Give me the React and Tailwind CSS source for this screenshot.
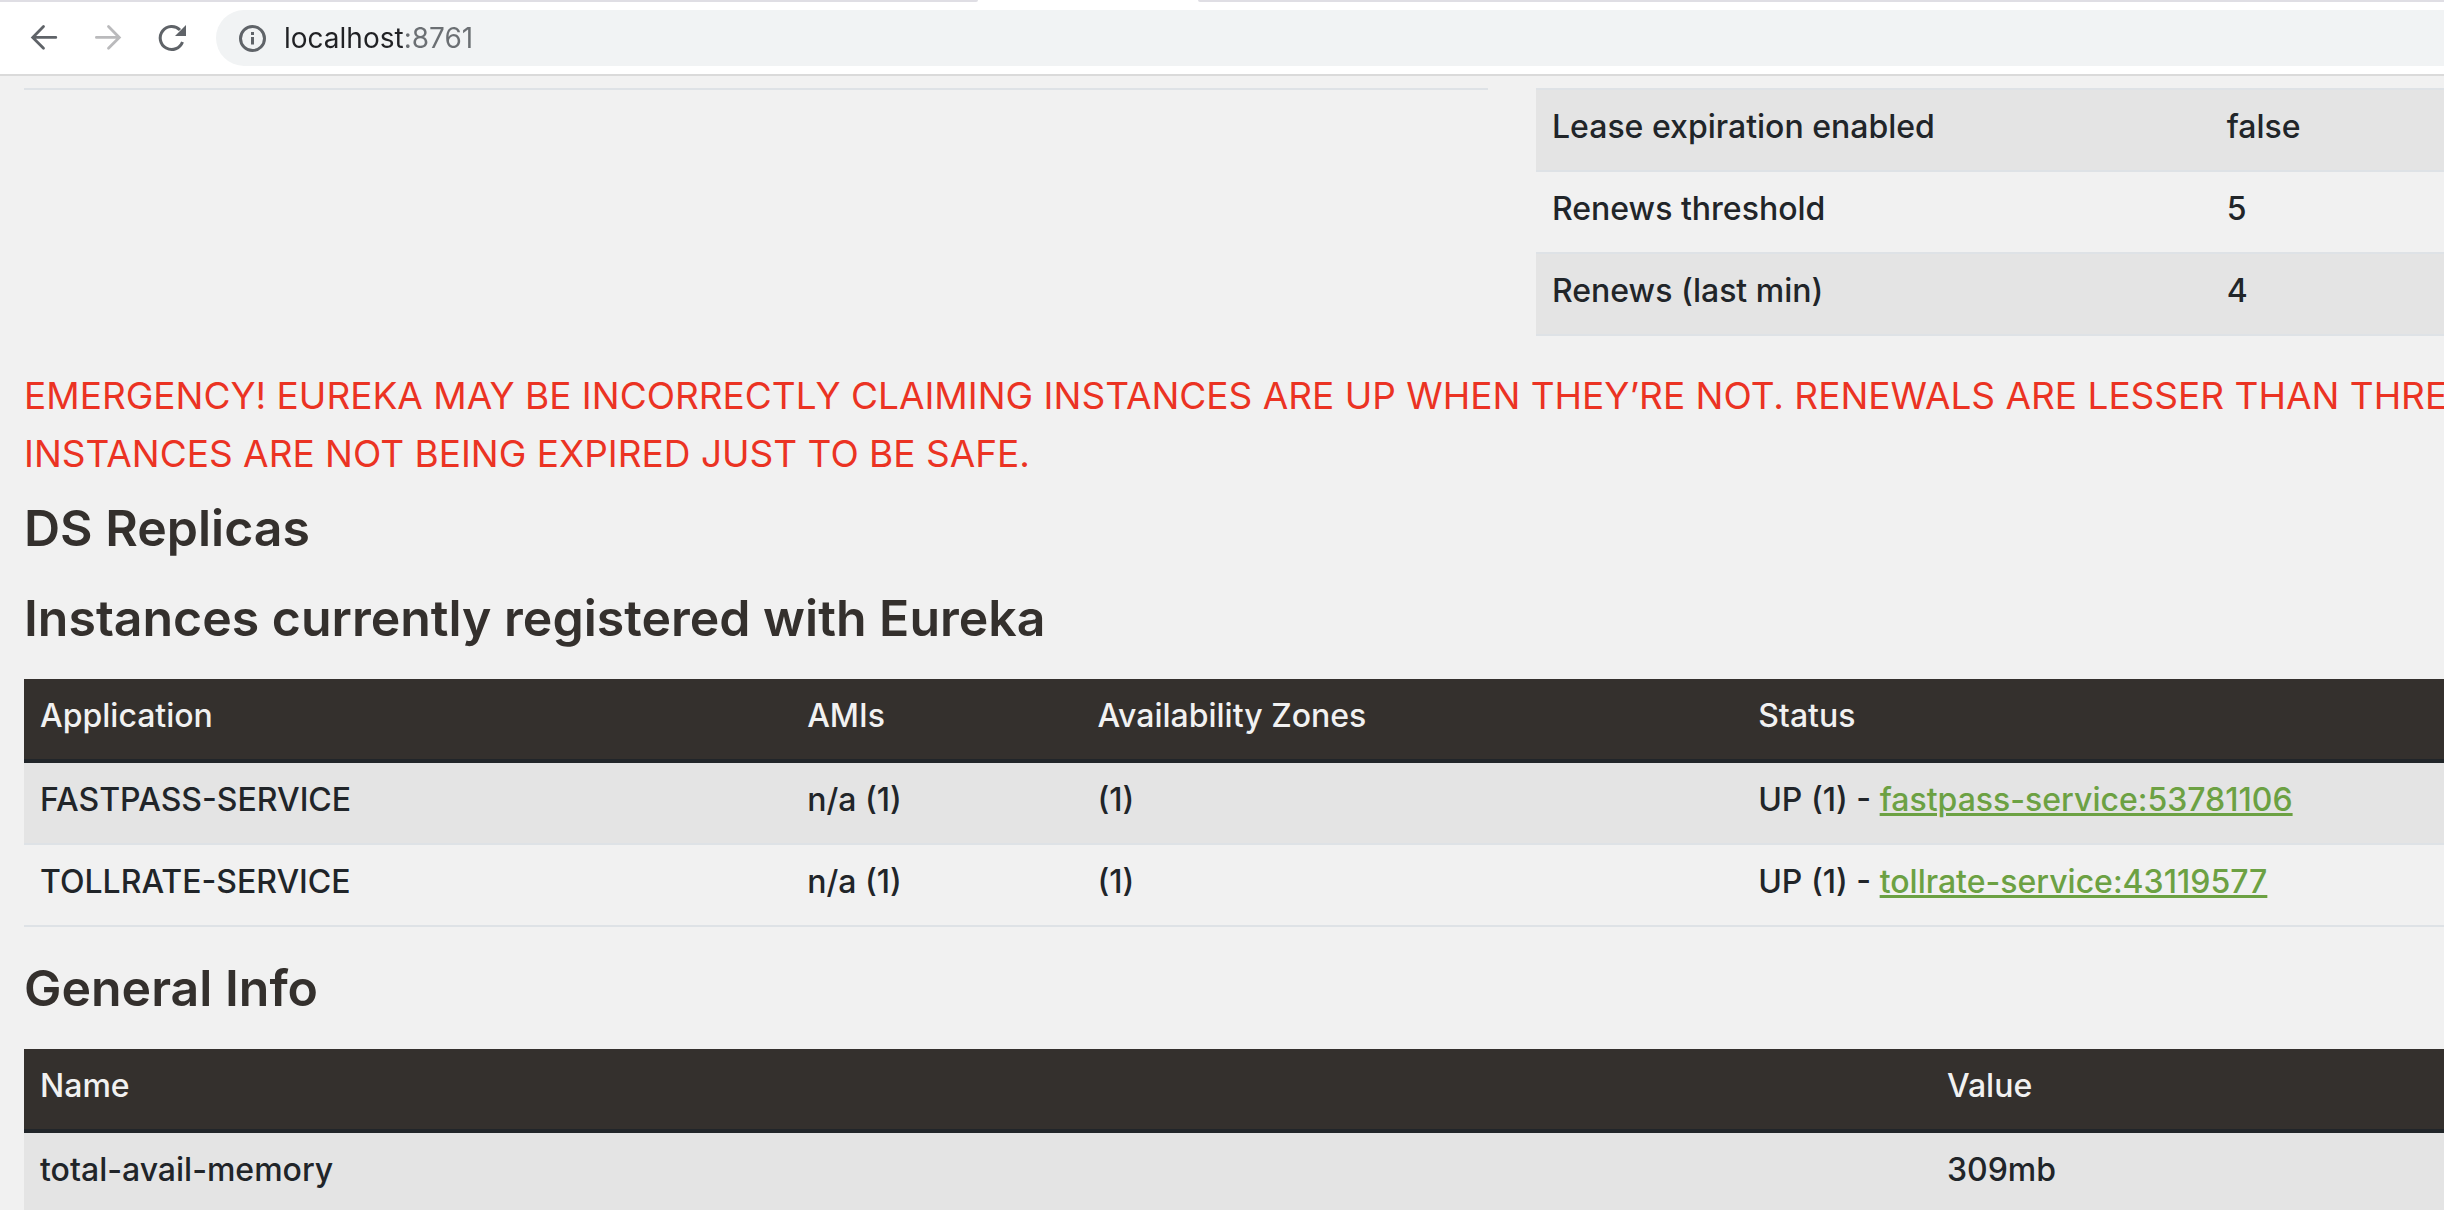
import React from "react";

function Cell({ as: Tag = "td", className = "", ...rest }) {
  return <Tag className={`px-4 pt-[13px] pb-[19px] text-left font-medium ${className}`} {...rest} />;
}

function Table({ columns, head, children, ...rest }) {
  return (
    <table className="w-full table-fixed border-separate border-spacing-0" {...rest}>
      <colgroup>
        {columns.map((c, i) => (
          <col key={i} className={c} />
        ))}
      </colgroup>
      {head && (
        <thead className="bg-[#34302d] text-[#f1f1f1]">
          <tr>
            {head.map((h) => (
              <Cell as="th" scope="col" key={h} className="border-b-4 border-[#212529]">
                {h}
              </Cell>
            ))}
          </tr>
        </thead>
      )}
      <tbody>{children}</tbody>
    </table>
  );
}

function Row({ cells }) {
  return (
    <tr className="odd:bg-[#e4e4e4]">
      {cells.map((c, i) => (
        <Cell key={i} className="border-b-2 border-[#dee2e6]">
          {c}
        </Cell>
      ))}
    </tr>
  );
}

function Heading({ children }) {
  return (
    <h1 className="mb-8 text-[50px] leading-[58px] font-semibold text-[#34302d]">{children}</h1>
  );
}

const status = [
  ["Lease expiration enabled", "false"],
  ["Renews threshold", "5"],
  ["Renews (last min)", "4"],
];

const instances = [
  ["FASTPASS-SERVICE", "fastpass-service:53781106"],
  ["TOLLRATE-SERVICE", "tollrate-service:43119577"],
];

function Toolbar() {
  return (
    <header className="border-b-2 border-[#dadada] bg-white">
      <div className="flex h-0.5" aria-hidden="true">
        <div className="w-[40%] rounded-br-sm bg-[#dfdee4]" />
        <div className="w-[9%]" />
        <div className="flex-1 rounded-bl-sm bg-[#dfdee4]" />
      </div>
      <div className="flex items-center py-2 pl-7">
        <div className="flex gap-8">
          <button type="button" aria-label="Back" className="text-[#5f6368]">
            <svg className="size-8" viewBox="0 0 32 32" fill="none" stroke="currentColor" strokeWidth="2.8">
              <path d="M27.8 15.4H5M15.5 4.6 4.7 15.4l10.8 10.8" strokeLinecap="round" />
            </svg>
          </button>
          <button type="button" aria-label="Forward" className="text-[#bababc]">
            <svg className="size-8" viewBox="0 0 32 32" fill="none" stroke="currentColor" strokeWidth="2.8">
              <path d="M4.4 15.4H27M16.5 4.6l10.8 10.8-10.8 10.8" strokeLinecap="round" />
            </svg>
          </button>
          <button type="button" aria-label="Reload" className="text-[#5f6368]">
            <svg className="size-8" viewBox="0 0 32 32" fill="none">
              <path
                d="M26.5 20A11.5 11.5 0 1 1 24 8"
                stroke="currentColor"
                strokeWidth="3"
              />
              <path d="M30 3v11H19z" fill="currentColor" />
            </svg>
          </button>
        </div>
        <label className="ml-7 flex h-14 flex-1 items-center gap-4 rounded-l-full bg-[#f1f3f4] pl-5">
          <svg className="size-8" viewBox="0 0 32 32" fill="none" aria-hidden="true">
            <circle cx="16.5" cy="16.5" r="12" stroke="#5f6368" strokeWidth="3" />
            <path d="M16.5 15v7.5M16.5 10v3" stroke="#5f6368" strokeWidth="3" />
          </svg>
          <span className="sr-only">Address</span>
          <input
            type="text"
            defaultValue="localhost:8761"
            className="h-10 flex-1 bg-[linear-gradient(90deg,#202124_119px,#6b6f73_119px)] bg-clip-text text-[28px] leading-10 text-transparent outline-none"
          />
        </label>
      </div>
    </header>
  );
}

export default function App() {
  return (
    <div className="h-screen overflow-hidden bg-[#f1f1f1] font-['Inter',sans-serif] text-[32px] leading-[48px] text-[#212529]">
      <Toolbar />
      <main className="pt-3 pl-6">
        <div className="mb-[31px] grid grid-cols-[1464fr_908fr] gap-12">
          <div className="border-t-2 border-[#dee2e6]" />
          <div className="border-t-2 border-[#dee2e6]">
            <Table columns={["w-[74.3%]", ""]} aria-label="System status">
              {status.map((r) => (
                <Row key={r[0]} cells={r} />
              ))}
            </Table>
          </div>
        </div>

        <h4 className="mb-4 text-[37px] leading-[58px] whitespace-nowrap text-[#eb3323]">
          EMERGENCY! EUREKA MAY BE INCORRECTLY CLAIMING INSTANCES ARE UP WHEN THEY’RE NOT. RENEWALS ARE LESSER THAN THRESHOLD
          <br />
          INSTANCES ARE NOT BEING EXPIRED JUST TO BE SAFE.
        </h4>

        <Heading>DS Replicas</Heading>

        <Heading>Instances currently registered with Eureka</Heading>
        <Table
          columns={["w-[31.7%]", "w-[12%]", "w-[27.3%]", ""]}
          head={["Application", "AMIs", "Availability Zones", "Status"]}
        >
          {instances.map(([name, id]) => (
            <Row
              key={name}
              cells={[
                name,
                "n/a (1)",
                "(1)",
                <>
                  UP (1) -{" "}
                  <a
                    href={`#${id}`}
                    className="text-[#6ca143] underline decoration-[3px] underline-offset-2"
                  >
                    {id}
                  </a>
                </>,
              ]}
            />
          ))}
        </Table>

        <div className="mt-8">
          <Heading>General Info</Heading>
          <Table columns={["w-[78.8%]", ""]} head={["Name", "Value"]}>
            <Row cells={["total-avail-memory", "309mb"]} />
          </Table>
        </div>
      </main>
    </div>
  );
}
